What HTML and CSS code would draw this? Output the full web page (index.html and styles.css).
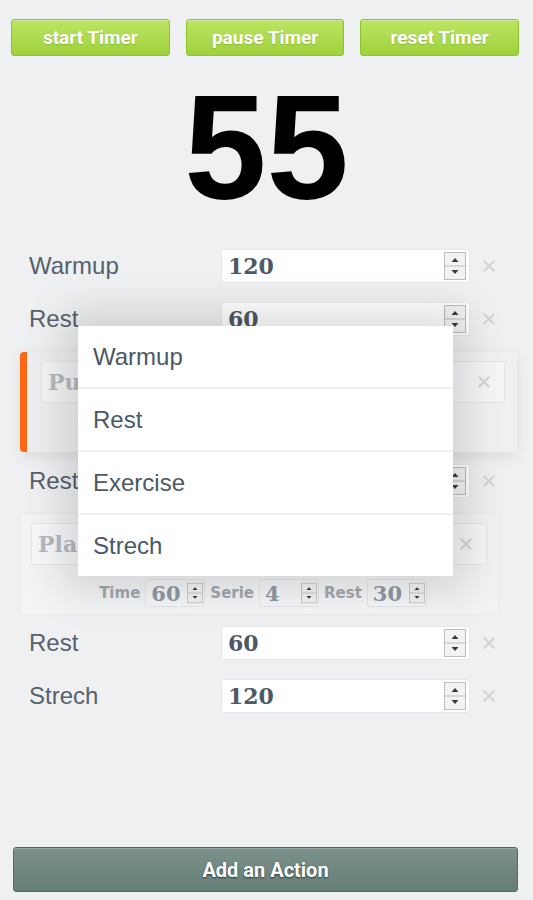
FILE: index.html
```html
<!DOCTYPE html>
<html>
<head>
<meta charset="utf-8">
<link rel="stylesheet" href="styles.css">
</head>
<body>
<svg class="defs" width="0" height="0">
  <symbol id="spin" viewBox="0 0 22 28">
    <rect x="0.5" y="0.5" width="21" height="27" fill="#f3f3f3" stroke="#bdbdbd"/>
    <line x1="1" y1="14" x2="21" y2="14" stroke="#bdbdbd"/>
    <path d="M7.5 10 L11 6 L14.5 10Z" fill="#3a3a3a"/>
    <path d="M7.5 18 L11 22 L14.5 18Z" fill="#3a3a3a"/>
  </symbol>
  <symbol id="del" viewBox="0 0 12 12">
    <path d="M1.5 1.5 L10.5 10.5 M10.5 1.5 L1.5 10.5" stroke="#d3d6d9" stroke-width="2.4" stroke-linecap="round"/>
  </symbol>
</svg>
<div class="page">
  <div class="controls">
    <button class="btn">start Timer</button>
    <button class="btn">pause Timer</button>
    <button class="btn">reset Timer</button>
  </div>
  <div class="timer">55</div>
  <div class="list">
    <div class="row">
      <span class="label">Warmup</span>
      <div class="num"><span class="val">120</span><svg class="spin"><use href="#spin"/></svg></div>
      <svg class="del"><use href="#del"/></svg>
    </div>
    <div class="row">
      <span class="label">Rest</span>
      <div class="num"><span class="val">60</span><svg class="spin"><use href="#spin"/></svg></div>
      <svg class="del"><use href="#del"/></svg>
    </div>
    <div class="exercise dragging">
      <div class="ex-name"><span class="ex-text">Push</span><svg class="del"><use href="#del"/></svg></div>
      <div class="params covered">
        <span class="plabel">Time</span>
        <div class="pnum"><span class="pval">60</span><svg class="pspin"><use href="#spin"/></svg></div>
        <span class="plabel">Serie</span>
        <div class="pnum"><span class="pval">4</span><svg class="pspin"><use href="#spin"/></svg></div>
        <span class="plabel">Rest</span>
        <div class="pnum"><span class="pval">30</span><svg class="pspin"><use href="#spin"/></svg></div>
      </div>
    </div>
    <div class="row">
      <span class="label">Rest</span>
      <div class="num"><span class="val">60</span><svg class="spin"><use href="#spin"/></svg></div>
      <svg class="del"><use href="#del"/></svg>
    </div>
    <div class="exercise">
      <div class="ex-name"><span class="ex-text">Pla</span><svg class="del"><use href="#del"/></svg></div>
      <div class="params">
        <span class="plabel">Time</span>
        <div class="pnum"><span class="pval">60</span><svg class="pspin"><use href="#spin"/></svg></div>
        <span class="plabel">Serie</span>
        <div class="pnum"><span class="pval">4</span><svg class="pspin"><use href="#spin"/></svg></div>
        <span class="plabel">Rest</span>
        <div class="pnum"><span class="pval">30</span><svg class="pspin"><use href="#spin"/></svg></div>
      </div>
    </div>
    <div class="row">
      <span class="label">Rest</span>
      <div class="num"><span class="val">60</span><svg class="spin"><use href="#spin"/></svg></div>
      <svg class="del"><use href="#del"/></svg>
    </div>
    <div class="row">
      <span class="label">Strech</span>
      <div class="num"><span class="val">120</span><svg class="spin"><use href="#spin"/></svg></div>
      <svg class="del"><use href="#del"/></svg>
    </div>
  </div>
  <button class="add">Add an Action</button>
  <ul class="menu">
    <li>Warmup</li>
    <li>Rest</li>
    <li>Exercise</li>
    <li>Strech</li>
  </ul>
</div>
</body>
</html>
```
FILE: styles.css
```css
html, body {
  margin: 0;
  padding: 0;
  background: #eef0f2;
}
.defs { position: absolute; width: 0; height: 0; overflow: hidden; }
.page {
  position: relative;
  height: 900px;
  font-family: "Liberation Sans", Arial, sans-serif;
}
.controls {
  display: flex;
  gap: 16px;
  padding: 19px 14px 0 11px;
}
.btn {
  flex: 1;
  height: 37px;
  border: 1px solid #8fc22f;
  border-radius: 3px;
  background: linear-gradient(#bce563, #9ed13d);
  color: #fff;
  font-family: Roboto, sans-serif;
  font-weight: bold;
  font-size: 19px;
  text-shadow: 0 1px 1px rgba(90, 130, 20, 0.35);
  box-shadow: inset 0 1px 0 rgba(255,255,255,0.35);
  padding: 0;
}
.timer {
  margin-top: 18px;
  height: 148px;
  font-size: 148px;
  line-height: 1;
  font-weight: bold;
  text-align: center;
  color: #000;
}
.list {
  margin-top: 27px;
  display: flex;
  flex-direction: column;
}
.row {
  display: flex;
  align-items: center;
  height: 34px;
  padding-left: 29px;
}
.row + .row { margin-top: 19px; }
.label {
  width: 192px;
  font-size: 24px;
  color: #56616c;
}
.num {
  width: 249px;
  height: 34px;
  box-sizing: border-box;
  background: #fff;
  border: 1px solid #e6e8ea;
  border-radius: 3px;
  display: flex;
  align-items: center;
  padding: 0 3px 0 6px;
}
.val {
  flex: 1;
  font-family: "DejaVu Serif", serif;
  font-weight: bold;
  font-size: 22px;
  color: #4c5865;
}
.spin { width: 22px; height: 28px; }
.del { width: 12px; height: 12px; margin-left: 13px; }
.exercise {
  margin: 16px 35px 12px 20px;
  height: 100px;
  box-sizing: border-box;
  padding: 9px 11px 0 11px;
  border-radius: 4px;
  background: linear-gradient(90deg, #f2f3f5, #f6f7f8 60%, #f1f2f4);
  box-shadow: 0 0 4px rgba(0,0,0,0.04);
}
.exercise.dragging {
  margin-right: 16px;
  border-left: 7px solid #ff6612;
  padding-left: 14px;
  padding-right: 12px;
  background: linear-gradient(90deg, #eceef0, #f6f7f8 70%, #eef0f2);
  box-shadow: 0 4px 14px rgba(0,0,0,0.08);
}
.ex-name {
  display: flex;
  align-items: center;
  height: 42px;
  box-sizing: border-box;
  border: 1px solid #e3e5e7;
  border-radius: 3px;
  background: rgba(255,255,255,0.35);
  padding: 0 14px 0 6px;
}
.ex-text {
  flex: 1;
  font-family: "DejaVu Serif", serif;
  font-weight: bold;
  font-size: 22px;
  color: #b4bac0;
}
.ex-name .del { margin-left: 0; }
.params {
  margin-top: 14px;
  display: flex;
  align-items: center;
  justify-content: center;
  gap: 5px;
  padding-left: 8px;
}
.params.covered { visibility: hidden; }
.plabel {
  font-family: "DejaVu Sans", sans-serif;
  font-weight: bold;
  font-size: 15px;
  color: #a0a8b0;
}
.pnum {
  width: 60px;
  height: 28px;
  box-sizing: border-box;
  border: 1px solid #e4e6e8;
  border-radius: 3px;
  background: #f6f7f8;
  display: flex;
  align-items: center;
  padding: 0 1px 0 5px;
}
.pval {
  flex: 1;
  font-family: "DejaVu Serif", serif;
  font-weight: bold;
  font-size: 21px;
  color: #8e99a4;
}
.pspin { width: 16px; height: 24px; }
.add {
  position: absolute;
  left: 13px;
  right: 15px;
  top: 847px;
  height: 45px;
  border: 1px solid #56695f;
  border-radius: 3px;
  background: linear-gradient(#7c938d, #667d77);
  color: #fff;
  font-family: Roboto, sans-serif;
  font-weight: bold;
  font-size: 20px;
  text-shadow: 0 1px 2px #2c3935;
  box-shadow: inset 0 1px 0 rgba(255,255,255,0.2);
}
.menu {
  position: absolute;
  left: 78px;
  top: 326px;
  width: 375px;
  margin: 0;
  padding: 0;
  list-style: none;
  background: #fff;
  box-shadow: 0 0 40px 14px rgba(0,0,0,0.14);
}
.menu li {
  height: 61px;
  display: flex;
  align-items: center;
  padding-left: 15px;
  font-size: 24px;
  color: #4b5866;
}
.menu li + li { border-top: 2px solid #eef0f2; }
```
